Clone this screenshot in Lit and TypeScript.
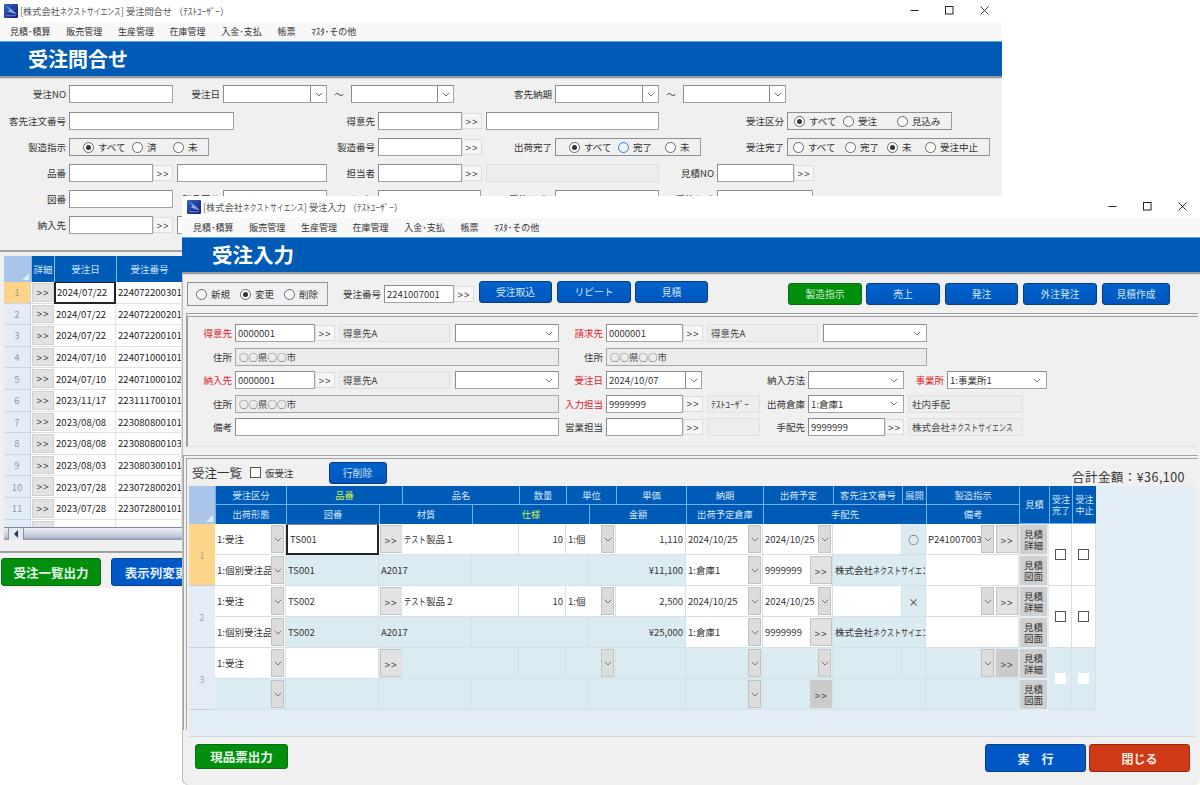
import { LitElement, html, css, svg } from "lit";
import { customElement } from "lit/decorators.js";

const chev = html`<svg class="chev" viewBox="0 0 8 5" width="8" height="5"><polyline points="0.8,0.8 4,4 7.2,0.8" fill="none" stroke="#777" stroke-width="1"/></svg>`;

const logo = html`<svg class="logo" viewBox="0 0 14 14" width="14" height="14">
  <defs><linearGradient id="lg" x1="0" y1="0" x2="1" y2="1"><stop offset="0" stop-color="#2a6cc8"/><stop offset="1" stop-color="#1a1678"/></linearGradient></defs>
  <rect width="14" height="14" rx="1" fill="url(#lg)"/>
  ${svg`<path d="M1 1.5C5 3 9 6 13 10.5C9 9 6 8 3.5 7.5C5 7 5.5 6 5.5 5.5C4 3.5 2.5 2.5 1 1.5Z" fill="#9fc0f0" opacity="0.85"/>
  <rect x="2" y="11" width="10" height="1.2" fill="#5f6fd0"/>`}
</svg>`;

const winCtl = html`<div class="ctl">
  <svg viewBox="0 0 9 9" width="9" height="9"><line x1="0.5" y1="4.5" x2="8.5" y2="4.5" stroke="#222" stroke-width="1"/></svg>
  <svg viewBox="0 0 9 9" width="9" height="9"><rect x="0.5" y="0.5" width="7.5" height="7.5" fill="none" stroke="#222" stroke-width="1"/></svg>
  <svg viewBox="0 0 9 9" width="9" height="9"><path d="M0.5 0.5L8.5 8.5M8.5 0.5L0.5 8.5" fill="none" stroke="#222" stroke-width="0.9"/></svg>
</div>`;

const menus = ["見積･積算", "販売管理", "生産管理", "在庫管理", "入金･支払", "帳票", "ﾏｽﾀ･その他"];

const kn = html`<span class="kn">ネクストサイエンス</span>`;
const tst = html`<span class="kt">テスト</span>`;

const lb = (t: string, red = false) => html`<span class="lb ${red ? "red" : ""}">${t}</span>`;
const f = (t = "") => html`<span class="f">${t}</span>`;
const d = (t: unknown = "", cls = "") => html`<span class="f d ${cls}">${t}</span>`;
const go = () => html`<span class="go"><span class="gg">>></span></span>`;
const combo = (t = "") => html`<span class="f combo"><span class="ct">${t}</span><span class="cbtn">${chev}</span></span>`;
const sel = (t = "", cls = "") => html`<span class="f sel ${cls}"><span class="ct">${t}</span>${chev}</span>`;
const radio = (t: string, w: string, on = false, hot = false) =>
  html`<span class="r ${w}"><i class="rd ${on ? "on" : ""} ${hot ? "hot" : ""}"></i>${t}</span>`;
const tilde = () => html`<span class="tl">～</span>`;

const listRows = [
  ["2024/07/22", "224072200301"], ["2024/07/22", "224072200201"], ["2024/07/22", "224072200101"],
  ["2024/07/10", "224071000101"], ["2024/07/10", "224071000102"], ["2023/11/17", "223111700101"],
  ["2023/08/08", "223080800101"], ["2023/08/08", "223080800103"], ["2023/08/03", "223080300101"],
  ["2023/07/28", "223072800201"], ["2023/07/28", "223072800101"], ["", ""],
];

const dd = html`<span class="dd">${chev}</span>`;
const gb = (cls = "") => html`<span class="gb ${cls}"><span class="gg">>></span></span>`;
const c = (t: unknown = "", cls = "") => html`<div class="c ${cls}"><span class="t">${t}</span></div>`;
const cd = (t = "", cls = "") => html`<div class="c ${cls}"><span class="t">${t}</span>${dd}</div>`;

interface Order {
  n: number; code: string; name: unknown; qty: string; unit: string; price: string; due: string; ship: string;
  exp: string; mf: string; amount: string; wh: string; sup: string; form: string;
}

const orders: Order[] = [
  { n: 1, code: "TS001", name: html`${tst}製品１`, qty: "10", unit: "1:個", price: "1,110", due: "2024/10/25", ship: "2024/10/25", exp: "○", mf: "P241007003", amount: "¥11,100", wh: "1:倉庫1", sup: "9999999", form: "1:個別受注品" },
  { n: 2, code: "TS002", name: html`${tst}製品２`, qty: "10", unit: "1:個", price: "2,500", due: "2024/10/25", ship: "2024/10/25", exp: "×", mf: "", amount: "¥25,000", wh: "1:倉庫1", sup: "9999999", form: "1:個別受注品" },
];

@customElement("app-root")
export class AppRoot extends LitElement {
  static styles = css`
    :host { display: block; position: relative; width: 1200px; height: 785px; overflow: hidden; background: #fff;
      font-family: "Noto Sans CJK JP", "Liberation Sans", sans-serif; font-size: 9.5px; color: #333; }
    .win { position: absolute; background: #f0f0f0; display: flex; flex-direction: column; overflow: hidden; }
    .w1 { left: 0; top: 0; width: 1002px; height: 588px; }
    .w2 { left: 182px; top: 196px; width: 1018px; height: 589px; border-bottom-left-radius: 6px; border-bottom-right-radius: 6px; box-shadow: inset 1px 0 #bdbdbd; }
    .title { height: 22px; flex: none; background: #fff; display: flex; align-items: center; padding-left: 4px; position: relative; font-size: 9.2px; color: #555; white-space: nowrap; }
    .w2 .title { padding-left: 5px; }
    .logo { margin-right: 2px; flex: none; }
    .kn { display: inline-block; width: 61px; transform: scaleX(.74); transform-origin: left center; white-space: nowrap; flex: none; }
    .kt { display: inline-block; width: 22px; transform: scaleX(.76); transform-origin: left center; white-space: nowrap; }
    .ctl { position: absolute; right: 13px; top: 6px; display: flex; gap: 26px; }
    .w2 .ctl { top: 6px; right: 13px; }
    .menu { height: 19px; flex: none; background: #f8f8f8; display: flex; align-items: center; gap: 15.7px; padding-left: 10px; font-size: 9px; color: #333; white-space: nowrap; }
    .w2 .menu { padding-left: 11px; }
    .band { height: 35px; flex: none; background: #005bb7; border-top: 1px solid #5ea8e8; box-sizing: border-box; display: flex; align-items: center; color: #fff; font-weight: 700; font-size: 20px; padding: 0 0 2px 28px; letter-spacing: 0; }
    .w2 .band { padding-left: 30px; font-size: 20.5px; }
    .rule { height: 2px; flex: none; background: #9a9a9a; border-bottom: 1px solid #ddd; }

    .form { flex: none; height: 172px; box-sizing: border-box; padding-top: 7px; display: flex; flex-direction: column; gap: 8px; overflow: hidden; margin-top: -1px; }
    .row { display: grid; height: 18px; flex: none; align-items: stretch; }
    .a1 { grid-template-columns: 69px 104px 50px 104px 24px 103px 101px 104px 24px 103px; margin-bottom: 1px; }
    .a2 { grid-template-columns: 69px 165px 144px 84px 24px 173px 128px 165px; }
    .a3 { grid-template-columns: 69px 140px 169px 84px 20px 73px 146px 86px 203px; }
    .a4 { grid-template-columns: 69px 84px 24px 150px 51px 84px 24px 173px 58px 77px 20px; }
    .a5 { grid-template-columns: 69px 104px 50px 104px 51px 103px 74px 104px 58px 96px; }
    .a6 { grid-template-columns: 69px 84px 24px 150px; }

    .lb { display: flex; align-items: center; justify-content: flex-end; padding-right: 3px; white-space: nowrap; color: #333; }
    .red { color: #e0212a; }
    .tl { display: flex; align-items: center; justify-content: center; color: #444; font-size: 9.5px; }
    .f { background: #fff; border: 1px solid #a2a2a2; border-top-color: #8c8c8c; border-left-color: #8c8c8c; box-sizing: border-box; display: flex; align-items: center; padding-left: 2px; white-space: nowrap; overflow: hidden; min-width: 0; color: #333; font-size: 9.5px; }
    .d { background: #ededed; border-color: #dfdfdf; color: #444; padding-left: 3px; }
    .addr { background: #ebebeb; border-color: #a6a6a6; }
    .ct { flex: 1; overflow: hidden; }
    .combo { padding-right: 0; }
    .cbtn { width: 15px; align-self: stretch; flex: none; border-left: 1px solid #888; display: flex; align-items: center; justify-content: center; background: #fff; }
    .sel { padding-right: 5px; }
    .ml5 { margin-left: 5px; }
    .ml4 { margin-left: 4px; }
    .go { display: flex; align-items: stretch; }
    .gg { letter-spacing: 1px; font-family: "Liberation Sans", sans-serif; font-size: 9.5px; color: #444; }
    .go .gg { width: 20px; box-sizing: border-box; background: #f6f6f6; border: 1px solid #dcdcdc; display: flex; align-items: center; justify-content: center; margin: 1px 0; }

    .rg { border: 1px solid #8e8e8e; border-right-color: #9c9c9c; box-sizing: border-box; display: flex; align-items: center; white-space: nowrap; background: #f0f0f0; }
    .p13 { padding-left: 13px; } .p6 { padding-left: 6px; } .p5 { padding-left: 5px; } .p8 { padding-left: 8px; }
    .r { display: inline-flex; align-items: center; gap: 4px; flex: none; color: #333; }
    .w38 { width: 38px; } .w41 { width: 41px; } .w42 { width: 42px; } .w44 { width: 44px; } .w47 { width: 47px; }
    .w49 { width: 49px; } .w52 { width: 52px; } .w54 { width: 54px; }
    .rd { width: 11px; height: 11px; border-radius: 50%; border: 1px solid #666; box-sizing: border-box; background: #fff; position: relative; flex: none; display: flex; align-items: center; justify-content: center; }
    .rd.on::after { content: ""; width: 5px; height: 5px; border-radius: 50%; background: #333; }
    .rd.hot { border-color: #2b80d0; background: #eef6fc; }

    .divider { height: 2px; flex: none; background: #a0a0a0; }
    .list { margin: 4px 0 0 4px; width: 178px; height: 284px; flex: none; display: flex; flex-direction: column; overflow: hidden; position: relative; background: #fff; }
    .lhead { display: grid; grid-template-columns: 27px 23px 62px 66px; height: 26px; flex: none; }
    .corner { background: #a9c5ea; position: relative; }
    .corner::after { content: ""; position: absolute; right: 2px; bottom: 2px; width: 0; height: 0; border-left: 7px solid transparent; border-bottom: 7px solid #dfe8f5; }
    .lh { background: #005bb7; color: #cfe4fa; display: flex; align-items: center; justify-content: center; border-left: 1px solid #7dbcf0; font-size: 9.5px; white-space: nowrap; }
    .lrows { flex: 1; overflow: hidden; }
    .lrow { display: grid; grid-template-columns: 27px 23px 62px 66px; height: 21.6px; box-sizing: border-box; }
    .rn { background: #e3ecf7; color: #9a9a9a; display: flex; align-items: center; justify-content: center; border-bottom: 1px solid #c8d4e4; border-right: 1px solid #c8d4e4; }
    .rn.sel1 { background: #fcd48a; }
    .lgo { display: flex; align-items: stretch; border-bottom: 1px solid #ddd; padding: 1px 0 1px 1px; }
    .lgo .gg { background: #e2e2e2; border: 1px solid #d0d0d0; flex: 1; display: flex; align-items: center; justify-content: center; }
    .lc { display: flex; align-items: center; border-bottom: 1px solid #e2e2e2; border-right: 1px solid #e2e2e2; padding-left: 2px; color: #222; font-size: 9.6px; white-space: nowrap; overflow: hidden; background: #fff; }
    .lc.foc { border: 2px solid #222; border-top-width: 1px; padding-left: 1px; }
    .scroll { height: 13px; flex: none; display: flex; align-items: stretch; padding-left: 4px; background: linear-gradient(#eceff5, #c2c9d8 70%, #8d96ad); border-top: 1px solid #7d88a4; box-sizing: border-box; }
    .sbtn { width: 14px; flex: none; display: flex; align-items: center; justify-content: center; background: #e4e9f2; border-left: 1px solid #8a94ad; border-right: 1px solid #8a94ad; }
    .sbtn i { width: 0; height: 0; border-top: 4px solid transparent; border-bottom: 4px solid transparent; border-right: 4px solid #334; }
    .foot1 { flex: none; margin-top: 11px; border-top: 2px solid #a0a0a0; padding-top: 5px; padding-left: 1px; display: flex; gap: 10px; }
    .big { display: flex; align-items: center; justify-content: center; box-sizing: border-box; color: #e8f6e8; font-weight: 700; font-size: 12.5px; border-radius: 3px; flex: none; white-space: nowrap; }
    .green { background: #028f0e; border: 1px solid #0c6c14; }
    .blue { background: #0058c6; border: 1px solid #0a3f8a; color: #e6effb; }
    .redb { background: #cf3915; border: 1px solid #9a2a10; color: #fbe9e2; }
    .b100 { width: 100px; height: 28px; }
    .b86 { width: 90px; height: 28px; }

    .tool { flex: none; height: 38px; box-sizing: border-box; display: grid; grid-template-columns: 141px 56px 70px 20px 78px 79px 77px 80px 74px 78px 78px 79px 73px; padding: 7px 0 0 5px; align-items: start; }
    .tool .rg { height: 24px; }
    .tool .lb { height: 18px; margin-top: 3px; }
    .tool .f, .tool .go { height: 18px; margin-top: 3px; }
    .tb { height: 22px; box-sizing: border-box; display: flex; align-items: center; justify-content: center; border-radius: 3px; background: linear-gradient(#0062cc, #0056bc); border: 1px solid #0a3d80; color: #d5e5f8; font-size: 9.8px; margin-left: 5px; margin-top: -1px; white-space: nowrap; }
    .tb.g { background: #028f0e; border-color: #0c6c14; color: #d8f0d8; }
    .tb.low { margin-top: 1px; }
    .tb.nom { margin-left: 0; }
    .tb.gap1 { margin-left: 4px; margin-right: 0; }

    .sec { flex: none; margin: 0 2px 0 4px; height: 134px; box-sizing: border-box; border-top: 4px double #a0a0a0; border-left: 2px solid #a0a0a0; border-bottom: 1px solid #e4e4e4; padding-top: 7px; display: flex; flex-direction: column; gap: 5.5px; }
    .b1 { grid-template-columns: 47px 80px 24px 111px 109px 47px 77px 24px 111px 109px; }
    .b2 { grid-template-columns: 47px 324px 47px 321px; }
    .b3 { grid-template-columns: 47px 80px 24px 111px 109px 47px 96px 106px 96px 43px 100px; }
    .b4 { grid-template-columns: 47px 324px 47px 77px 24px 53px 48px 96px 119px; }
    .b5 { grid-template-columns: 47px 324px 47px 77px 24px 53px 48px 77px 19px 119px; }
    .b4 .sel, .b3 .sel { min-width: 0; }

    .sec3 { flex: none; margin: 8px 2px 0 1px; height: 275px; box-sizing: border-box; border-top: 4px double #a4a4a4; border-left: 4px double #a4a4a4; position: relative; display: flex; flex-direction: column; }
    .sh { height: 27px; flex: none; display: flex; align-items: center; padding-left: 5px; position: relative; white-space: nowrap; }
    .sh .tt { font-size: 12.5px; color: #333; }
    .sh .cbx { margin: 0 4px 0 8px; }
    .cbx { width: 11px; height: 11px; border: 1px solid #555; box-sizing: border-box; background: #fff; flex: none; }
    .sh .del { width: 58px; height: 22px; margin-left: 35px; margin-top: 0; }
    .total { margin-left: auto; margin-right: 13px; font-size: 12.5px; color: #333; margin-top: 8px; letter-spacing: .45px; }
    .gridp { flex: none; margin-left: 2px; width: 1006px; height: 251px; background: #e2edf6; border-bottom: 1px solid #d0d8e0; box-sizing: border-box; }
    .ghead { display: flex; height: 38px; }
    .ghead .corner { width: 26px; flex: none; }
    .hmain { width: 804px; flex: none; display: flex; flex-direction: column; }
    .hr { height: 19px; display: grid; }
    .hr1 { grid-template-columns: 71px 116px 117px 47px 50px 70px 77px 70px 69px 24px 93px; }
    .hr2 { grid-template-columns: 71px 93px 93px 117px 97px 77px 163px 93px; }
    .hc { background: #005bb7; color: #d4e6fa; display: flex; align-items: center; justify-content: center; box-sizing: border-box; border-left: 1px solid #6db2ee; border-bottom: 1px solid #6db2ee; white-space: nowrap; font-size: 9.3px; overflow: hidden; text-align: center; line-height: 11px; }
    .hc.y { color: #cdf04c; }
    .hc.tallest { width: 30px; flex: none; }
    .hc.na { width: 23px; flex: none; font-size: 9px; }
    .hc.nb { width: 24px; flex: none; font-size: 9px; }
    .hr2 .hc { border-bottom: none; }

    .pair { display: flex; height: 62px; }
    .pn { width: 26px; flex: none; background: #e3ecf7; color: #a8a8a8; display: flex; align-items: center; justify-content: center; border-bottom: 1px solid #c4d0de; box-sizing: border-box; }
    .pn.sel1 { background: #fcd48a; }
    .pmain { width: 804px; flex: none; display: flex; flex-direction: column; }
    .dr { height: 31px; display: grid; }
    .dr1 { grid-template-columns: 71px 93px 23px 117px 47px 50px 70px 77px 70px 69px 24px 93px; }
    .dr2 { grid-template-columns: 71px 93px 93px 117px 97px 77px 70px 93px 93px; }
    .c { display: flex; align-items: center; box-sizing: border-box; border-right: 1px solid #d3e2e8; border-bottom: 1px solid #d3e2e8; padding-left: 2px; white-space: nowrap; overflow: hidden; color: #333; background: #fff; min-width: 0; font-size: 9.5px; }
    .c.tq { background: #daebf1; }
    .c.R { justify-content: flex-end; padding-right: 2px; }
    .c.C { justify-content: center; padding-left: 0; font-size: 10.5px; }
    .c.foc { border: 2px solid #222; border-top: 1px solid #888; }
    .c.flush { padding: 0; }
    .t { flex: 1; overflow: hidden; min-width: 0; }
    .c.R .t, .c.C .t { flex: none; }
    .dd { width: 13px; flex: none; align-self: stretch; margin: 1px 1px 1px 0; background: #dcdcdc; border: 1px solid #c2c2c2; box-sizing: border-box; display: flex; align-items: center; justify-content: center; }
    .gb { display: flex; align-items: stretch; align-self: stretch; flex: none; width: 22px; margin: 1px 0 1px 1px; box-sizing: border-box; }
    .gb .gg { flex: 1; background: #e2e2e2; border: 1px solid #c4c4c4; display: flex; align-items: center; justify-content: center; padding-top: 2px; box-sizing: border-box; }
    .gb.dk .gg { background: #cbcbcb; border-color: #cbcbcb; }
    .in { width: 46px; flex: none; background: #fff; align-self: stretch; display: flex; align-items: center; padding-left: 2px; box-sizing: border-box; }
    .mcol { width: 30px; flex: none; display: flex; flex-direction: column; }
    .mb { height: 31px; box-sizing: border-box; margin: 0; padding: 1px 2px 1px 1px; background: transparent; }
    .mb span { display: flex; align-items: center; justify-content: center; height: 100%; background: #cfcfcf; font-size: 9.5px; line-height: 11px; text-align: center; color: #333; }
    .chkc { flex: none; display: flex; align-items: center; justify-content: center; background: #fff; border-right: 1px solid #d3e2e8; border-bottom: 1px solid #d3e2e8; box-sizing: border-box; }
    .chkc.tq { background: #daebf1; }
    .chkc.tq .cbx { border-color: #fff; }
    .cw23 { width: 23px; } .cw24 { width: 24px; }

    .foot2 { flex: 1; display: flex; align-items: flex-start; padding: 14px 10px 0 13px; }
    .b93 { width: 93px; height: 25px; }
    .b101 { width: 101px; height: 28px; font-size: 12px; }
    .mla { margin-left: auto; }
    .ml3 { margin-left: 3px; }
  `;

  private title_(t: string) {
    return html`<div class="title">${logo}<span>[株式会社${kn}] ${t} （ﾃｽﾄﾕｰｻﾞｰ）</span>${winCtl}</div>`;
  }
  private menu_() {
    return html`<div class="menu">${menus.map((m) => html`<span>${m}</span>`)}</div>`;
  }

  private pair(o: Order) {
    const sel1 = o.n === 1;
    return html`<div class="pair">
      <div class="pn ${sel1 ? "sel1" : ""}">${o.n}</div>
      <div class="pmain">
        <div class="dr dr1">
          ${cd("1:受注")}
          ${c(o.code, sel1 ? "foc" : "")}
          <div class="c flush">${gb()}</div>
          ${c(o.name)}
          ${c(o.qty, "R")}
          ${cd(o.unit)}
          ${c(o.price, "R")}
          ${cd(o.due)}
          ${cd(o.ship)}
          ${c()}
          ${c(o.exp, "tq C")}
          <div class="c"><span class="t">${o.mf}</span>${dd}${gb()}</div>
        </div>
        <div class="dr dr2">
          ${cd(o.form)}
          ${c(o.code, "tq")}
          ${c("A2017", "tq")}
          ${c("", "tq")}
          ${c(o.amount, "tq R")}
          ${cd(o.wh)}
          <div class="c flush"><span class="in">${o.sup}</span>${gb()}</div>
          ${c(html`株式会社${kn}`, "tq")}
          ${c()}
        </div>
      </div>
      <div class="mcol">
        <div class="mb"><span>見積<br />詳細</span></div>
        <div class="mb"><span>見積<br />図面</span></div>
      </div>
      <div class="chkc cw23"><i class="cbx"></i></div>
      <div class="chkc cw24"><i class="cbx"></i></div>
    </div>`;
  }

  private emptyPair() {
    return html`<div class="pair">
      <div class="pn">3</div>
      <div class="pmain">
        <div class="dr dr1">
          ${cd("1:受注")}
          ${c()}
          <div class="c flush tq">${gb()}</div>
          ${c("", "tq")}${c("", "tq")}
          <div class="c tq"><span class="t"></span>${dd}</div>
          ${c("", "tq")}
          <div class="c tq"><span class="t"></span>${dd}</div>
          <div class="c tq"><span class="t"></span>${dd}</div>
          ${c("", "tq")}${c("", "tq")}
          <div class="c tq"><span class="t"></span>${dd}${gb("dk")}</div>
        </div>
        <div class="dr dr2">
          <div class="c tq"><span class="t"></span>${dd}</div>
          ${c("", "tq")}${c("", "tq")}${c("", "tq")}${c("", "tq")}
          <div class="c tq"><span class="t"></span>${dd}</div>
          <div class="c flush tq"><span class="t"></span>${gb("dk")}</div>
          ${c("", "tq")}${c("", "tq")}
        </div>
      </div>
      <div class="mcol">
        <div class="mb"><span>見積<br />詳細</span></div>
        <div class="mb"><span>見積<br />図面</span></div>
      </div>
      <div class="chkc cw23 tq"><i class="cbx"></i></div>
      <div class="chkc cw24 tq"><i class="cbx"></i></div>
    </div>`;
  }

  render() {
    return html`
      <section class="win w1">
        ${this.title_("受注問合せ")}
        ${this.menu_()}
        <div class="band">受注問合せ</div>
        <div class="rule"></div>
        <div class="form">
          <div class="row a1">
            ${lb("受注NO")}${f()}${lb("受注日")}${combo()}${tilde()}${combo()}${lb("客先納期")}${combo()}${tilde()}${combo()}
          </div>
          <div class="row a2">
            ${lb("客先注文番号")}${f()}${lb("得意先")}${f()}${go()}${f()}${lb("受注区分")}
            <div class="rg p6">${radio("すべて", "w49", true)}${radio("受注", "w54")}${radio("見込み", "w54")}</div>
          </div>
          <div class="row a3">
            ${lb("製造指示")}
            <div class="rg p13">${radio("すべて", "w49", true)}${radio("済", "w41")}${radio("未", "w41")}</div>
            ${lb("製造番号")}${f()}${go()}${lb("出荷完了")}
            <div class="rg p13">${radio("すべて", "w49", true)}${radio("完了", "w47", false, true)}${radio("未", "w38")}</div>
            ${lb("受注完了")}
            <div class="rg p5">${radio("すべて", "w52")}${radio("完了", "w42")}${radio("未", "w38", true)}${radio("受注中止", "w54")}</div>
          </div>
          <div class="row a4">
            ${lb("品番")}${f()}${go()}${f()}${lb("担当者")}${f()}${go()}${d()}${lb("見積NO")}${f()}${go()}
          </div>
          <div class="row a5">
            ${lb("図番")}${f()}${lb("製品区分")}${f()}${lb("ｶﾃｺﾞﾘ")}${f()}${lb("受注ｶﾃｺﾞﾘ")}${f()}${lb("受注ｶﾃｺﾞ")}${f()}
          </div>
          <div class="row a6">
            ${lb("納入先")}${f()}${go()}${f()}
          </div>
        </div>
        <div class="divider"></div>
        <div class="list">
          <div class="lhead">
            <div class="corner"></div>
            <div class="lh">詳細</div><div class="lh">受注日</div><div class="lh">受注番号</div>
          </div>
          <div class="lrows">
            ${listRows.map(
              (r, i) => html`<div class="lrow">
                <div class="rn ${i === 0 ? "sel1" : ""}">${i + 1}</div>
                <div class="lgo"><span class="gg">>></span></div>
                <div class="lc ${i === 0 ? "foc" : ""}">${r[0]}</div>
                <div class="lc">${r[1]}</div>
              </div>`
            )}
          </div>
          <div class="scroll"><div class="sbtn"><i></i></div></div>
        </div>
        <div class="foot1">
          <div class="big green b100">受注一覧出力</div>
          <div class="big blue b86">表示列変更</div>
        </div>
      </section>

      <section class="win w2">
        ${this.title_("受注入力")}
        ${this.menu_()}
        <div class="band">受注入力</div>
        <div class="rule"></div>
        <div class="tool">
          <div class="rg p8">${radio("新規", "w44")}${radio("変更", "w44", true)}${radio("削除", "w44")}</div>
          ${lb("受注番号")}${f("2241007001")}${go()}
          <div class="tb">受注取込</div>
          <div class="tb">リピート</div>
          <div class="tb gap1">見積</div>
          <span></span>
          <div class="tb g low nom">製造指示</div>
          <div class="tb low gap1">売上</div>
          <div class="tb low">発注</div>
          <div class="tb low">外注発注</div>
          <div class="tb low">見積作成</div>
        </div>
        <div class="sec">
          <div class="row b1">
            ${lb("得意先", true)}${f("0000001")}${go()}${d("得意先A")}${sel("", "ml5")}
            ${lb("請求先", true)}${f("0000001")}${go()}${d("得意先A")}${sel("", "ml5")}
          </div>
          <div class="row b2">
            ${lb("住所")}${d("○○県○○市", "addr")}${lb("住所")}${d("○○県○○市", "addr")}
          </div>
          <div class="row b3">
            ${lb("納入先", true)}${f("0000001")}${go()}${d("得意先A")}${sel("", "ml5")}
            ${lb("受注日", true)}${combo("2024/10/07")}${lb("納入方法")}${sel()}${lb("事業所", true)}${sel("1:事業所1")}
          </div>
          <div class="row b4">
            ${lb("住所")}${d("○○県○○市", "addr")}${lb("入力担当", true)}${f("9999999")}${go()}${d("ﾃｽﾄﾕｰｻﾞｰ")}${lb("出荷倉庫")}${sel("1:倉庫1")}${d("社内手配", "ml4")}
          </div>
          <div class="row b5">
            ${lb("備考")}${f()}${lb("営業担当")}${f()}${go()}${d()}${lb("手配先")}${f("9999999")}${go()}${d(html`株式会社${kn}`, "ml4")}
          </div>
        </div>
        <div class="sec3">
          <div class="sh">
            <span class="tt">受注一覧</span><i class="cbx"></i><span>仮受注</span>
            <div class="tb del">行削除</div>
            <span class="total">合計金額：¥36,100</span>
          </div>
          <div class="gridp">
            <div class="ghead">
              <div class="corner"></div>
              <div class="hmain">
                <div class="hr hr1">
                  <div class="hc">受注区分</div><div class="hc y">品番</div><div class="hc">品名</div><div class="hc">数量</div>
                  <div class="hc">単位</div><div class="hc">単価</div><div class="hc">納期</div><div class="hc">出荷予定</div>
                  <div class="hc">客先注文番号</div><div class="hc">展開</div><div class="hc">製造指示</div>
                </div>
                <div class="hr hr2">
                  <div class="hc">出荷形態</div><div class="hc">図番</div><div class="hc">材質</div><div class="hc y">仕様</div>
                  <div class="hc">金額</div><div class="hc">出荷予定倉庫</div><div class="hc">手配先</div><div class="hc">備考</div>
                </div>
              </div>
              <div class="hc tallest">見積</div>
              <div class="hc na">受注<br />完了</div>
              <div class="hc nb">受注<br />中止</div>
            </div>
            ${orders.map((o) => this.pair(o))}
            ${this.emptyPair()}
          </div>
        </div>
        <div class="foot2">
          <div class="big green b93">現品票出力</div>
          <div class="big blue b101 mla">実　行</div>
          <div class="big redb b101 ml3">閉じる</div>
        </div>
      </section>
    `;
  }
}
